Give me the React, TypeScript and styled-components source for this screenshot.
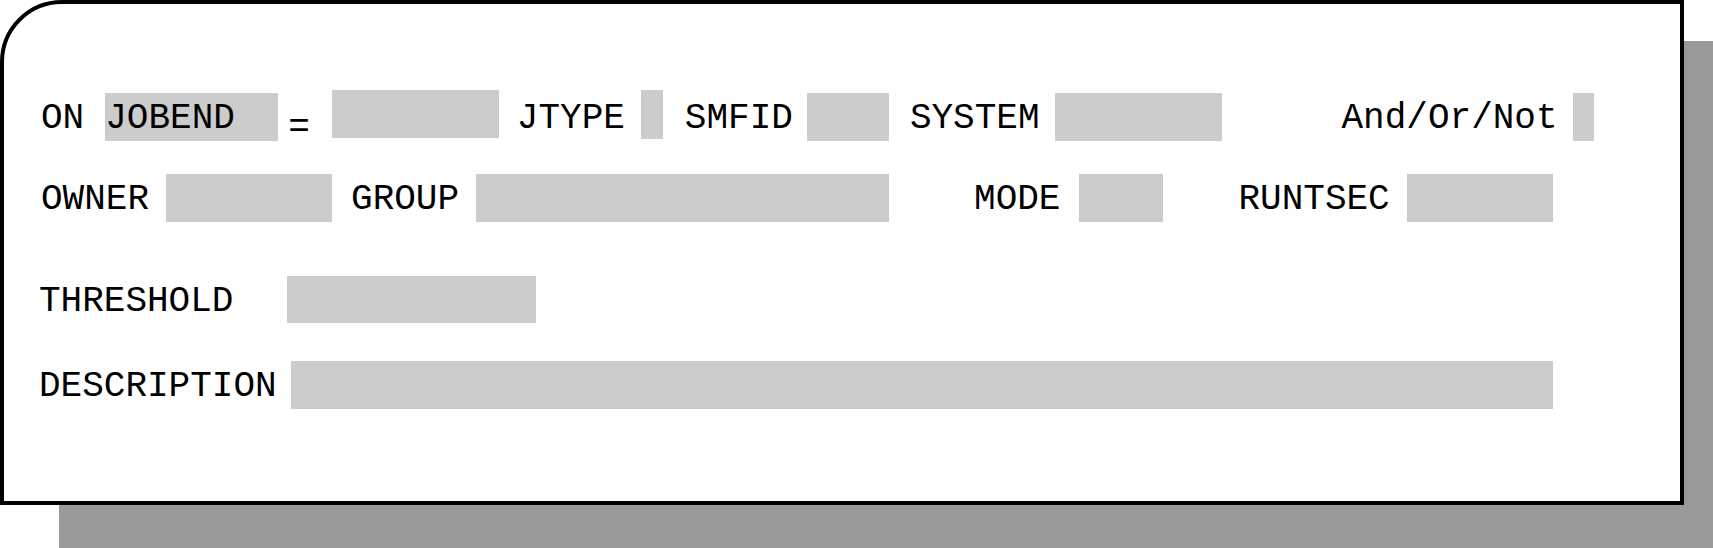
import React from 'react';
import styled, { createGlobalStyle } from 'styled-components';

const GlobalStyle = createGlobalStyle`
  html, body {
    margin: 0;
    padding: 0;
    background: #ffffff;
    overflow: hidden;
  }
`;

const Page = styled.div`
  width: 1713px;
  height: 548px;
  overflow: hidden;
  background: #ffffff;
`;

const Panel = styled.div`
  width: 1684px;
  height: 505px;
  box-sizing: border-box;
  background: #ffffff;
  border: 4px solid #000000;
  border-top-left-radius: 62px;
  box-shadow: 59px 41px 0 #999999, 59px 47px 0 #999999;
  padding-top: 89px;
  font-family: 'Liberation Mono', 'Courier New', monospace;
  font-size: 36px;
  color: #000000;
`;

const Row = styled.div<{ $gap?: number }>`
  display: flex;
  align-items: flex-start;
  height: 48px;
  margin-top: ${p => p.$gap || 0}px;
`;

const Label = styled.span<{ $ml?: number }>`
  display: block;
  flex: none;
  margin-left: ${p => p.$ml || 0}px;
  height: 48px;
  line-height: 52px;
  white-space: pre;
`;

const Field = styled.div<{ $ml?: number; $w: number; $h?: number; $mt?: number }>`
  flex: none;
  margin-left: ${p => p.$ml || 0}px;
  margin-top: ${p => p.$mt || 0}px;
  width: ${p => p.$w}px;
  height: ${p => p.$h || 48}px;
  line-height: 52px;
  background: #cccccc;
  white-space: pre;
  overflow: hidden;
`;

// the "=" sits low on the line in the original form
const Equals = styled(Label)`
  margin-top: 9px;
  height: 39px;
`;

export default function App(): React.JSX.Element {
  return (
    <Page>
      <GlobalStyle />
      <Panel>
        <Row>
          <Label $ml={37}>ON</Label>
          <Field $ml={21} $w={173}>JOBEND</Field>
          <Equals $ml={10}>=</Equals>
          <Field $ml={22} $w={167} $mt={-3}></Field>
          <Label $ml={18}>JTYPE</Label>
          <Field $ml={16} $w={22} $h={49} $mt={-3}></Field>
          <Label $ml={22}>SMFID</Label>
          <Field $ml={14} $w={82}></Field>
          <Label $ml={21}>SYSTEM</Label>
          <Field $ml={15} $w={167}></Field>
          <Label $ml={120}>And/Or/Not</Label>
          <Field $ml={15} $w={21}></Field>
        </Row>

        <Row $gap={33}>
          <Label $ml={37}>OWNER</Label>
          <Field $ml={17} $w={166}></Field>
          <Label $ml={19}>GROUP</Label>
          <Field $ml={17} $w={413}></Field>
          <Label $ml={85}>MODE</Label>
          <Field $ml={19} $w={84}></Field>
          <Label $ml={75}>RUNTSEC</Label>
          <Field $ml={17} $w={146}></Field>
        </Row>

        <Row $gap={54}>
          <Label $ml={35}>THRESHOLD</Label>
          <Field $ml={54} $w={249} $h={47}></Field>
        </Row>

        <Row $gap={37}>
          <Label $ml={35}>DESCRIPTION</Label>
          <Field $ml={14} $w={1262}></Field>
        </Row>
      </Panel>
    </Page>
  );
}
